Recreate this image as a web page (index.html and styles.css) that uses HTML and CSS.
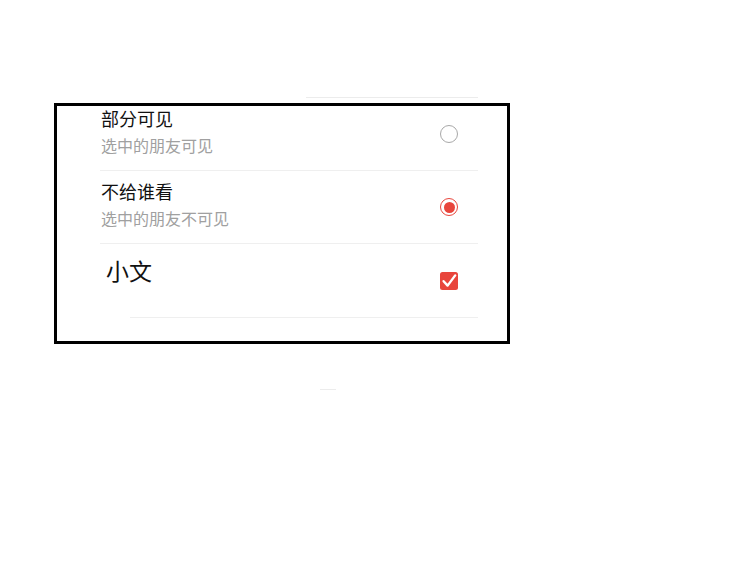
FILE: index.html
```html
<!DOCTYPE html>
<html lang="zh">
<head>
<meta charset="utf-8">
<link rel="stylesheet" href="styles.css">
</head>
<body>
<div class="page">
  <div class="stub-top"></div>
  <ul class="list">
    <li class="row">
      <div class="texts">
        <div class="title">部分可见</div>
        <div class="sub">选中的朋友可见</div>
      </div>
      <span class="radio"></span>
    </li>
    <li class="row">
      <div class="texts">
        <div class="title">不给谁看</div>
        <div class="sub">选中的朋友不可见</div>
      </div>
      <span class="radio on"></span>
    </li>
    <li class="row row-friend">
      <div class="name">小文</div>
      <svg class="check" width="18" height="18" viewBox="0 0 18 18">
        <rect x="0" y="0" width="18" height="18" rx="2.5" fill="#e8453c"/>
        <path d="M3.6 9.2 L7.6 13.6 L15.2 3.4" fill="none" stroke="#fff" stroke-width="2.4" stroke-linecap="round" stroke-linejoin="round"/>
      </svg>
    </li>
  </ul>
  <div class="stub-bottom"></div>
  <div class="frame"></div>
</div>
</body>
</html>
```

FILE: styles.css
```css
html, body {
  margin: 0;
  padding: 0;
  background: #fff;
}
.page {
  position: relative;
  width: 750px;
  height: 586px;
  padding-top: 97px;
  box-sizing: border-box;
  font-family: "Noto Sans CJK SC", "Noto Sans", sans-serif;
  color: #1a1a1a;
}
.stub-top {
  margin-left: 306px;
  width: 172px;
  height: 1px;
  background: #ececec;
}
.list {
  list-style: none;
  margin: 0 0 0 100px;
  padding: 0;
  width: 378px;
}
.row {
  display: flex;
  align-items: center;
  justify-content: space-between;
  height: 72px;
  border-bottom: 1px solid #efefef;
}
.texts {
  display: flex;
  flex-direction: column;
  padding-left: 1px;
  margin-bottom: 6px;
}
.title {
  font-size: 18px;
  line-height: 26px;
  color: #111;
}
.sub {
  font-size: 16px;
  line-height: 24px;
  margin-top: 2px;
  color: #a0a0a0;
}
.radio {
  width: 18px;
  height: 18px;
  box-sizing: border-box;
  border: 1.5px solid #a8a8a8;
  border-radius: 50%;
  margin-right: 20px;
  position: relative;
}
.radio.on {
  border: 1.5px solid #e8453c;
  display: flex;
  align-items: center;
  justify-content: center;
}
.radio.on::after {
  content: "";
  width: 11px;
  height: 11px;
  border-radius: 50%;
  background: #e8453c;
}
.row-friend {
  position: relative;
  border-bottom: none;
  height: 73px;
}
.row-friend::after {
  content: "";
  position: absolute;
  left: 30px;
  right: 0;
  bottom: -1px;
  height: 1px;
  background: #efefef;
}
.name {
  font-size: 23px;
  line-height: 30px;
  padding-left: 6px;
  margin-bottom: 21px;
  color: #111;
}
.check {
  margin-right: 20px;
  margin-top: 1px;
}
.stub-bottom {
  margin: 72px 0 0 320px;
  width: 16px;
  height: 1px;
  background: #ececec;
}
.frame {
  position: absolute;
  left: 54px;
  top: 103px;
  width: 456px;
  height: 241px;
  box-sizing: border-box;
  border: 3px solid #000;
  pointer-events: none;
}
```
